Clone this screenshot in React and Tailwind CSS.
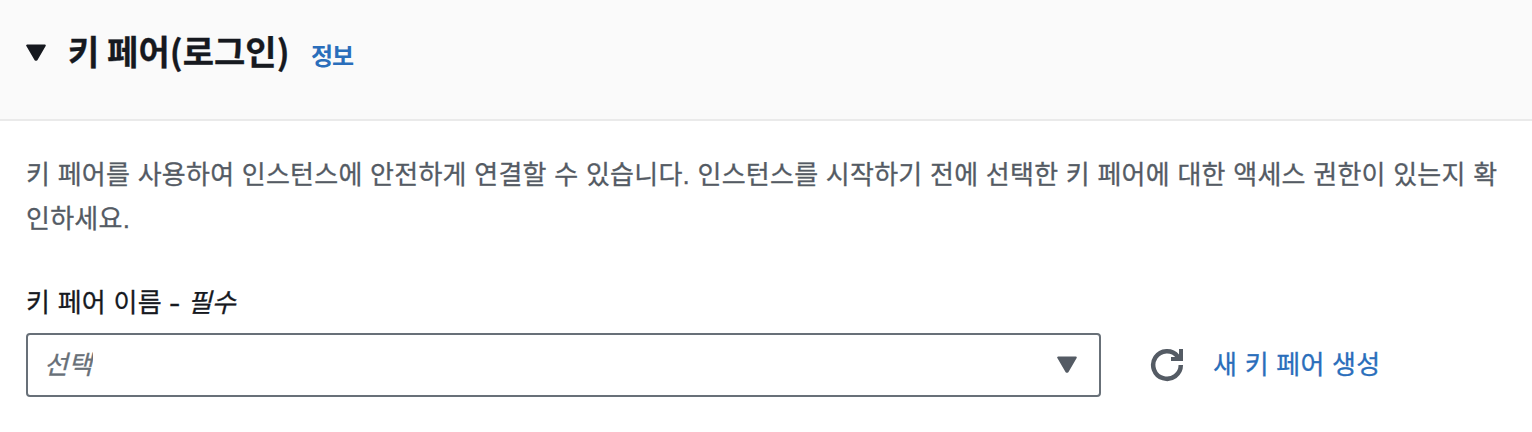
function RefreshIcon() {
  return (
    <svg className="h-[34px] w-[34px]" viewBox="0 0 34 34" fill="none" stroke="#545b64" aria-hidden="true">
      <path d="M30.8 17a13.8 13.8 0 1 1-3.1-8.7l1.8 2" strokeWidth="4.5" />
      <path d="M21 11h10V1" strokeWidth="4" />
    </svg>
  );
}

function Caret({ className }) {
  return (
    <svg className={className} viewBox="0 0 20 17" fill="currentColor" stroke="currentColor" strokeWidth="2" strokeLinejoin="round" aria-hidden="true">
      <path d="M1.2 1.5h17.6L10.5 15.7h-1z" />
    </svg>
  );
}

export default function App() {
  return (
    <main className="h-[432px] w-[1532px] overflow-hidden bg-white font-['Liberation_Sans','Noto_Sans_CJK_KR',sans-serif] text-[26px] leading-[44px] tracking-[0.25px] text-[#545b64] [-webkit-text-stroke:0.3px]">
      <header className="flex h-[121px] items-center border-b-2 border-[#eaeaea] bg-[#fafafa] pb-[14px] pl-[26px]">
        <Caret className="h-[17px] w-5 text-[#16191f]" />
        <h2 className="ml-[22px] w-[222px] whitespace-nowrap pb-[3px] font-['Noto_Sans_CJK_KR',sans-serif] text-[34px] font-bold tracking-[0.05px] text-[#16191f]">키 페어(로그인)</h2>
        <a className="ml-[21px] whitespace-nowrap pt-[9px] text-[24px] font-bold tracking-[-1px] text-[#2a6ebb] [-webkit-text-stroke:0px]">정보</a>
      </header>
      <section className="px-[26px] pt-[32px]">
        <p className="whitespace-nowrap">
          키 페어를 사용하여 인스턴스에 안전하게 연결할 수 있습니다. 인스턴스를 시작하기 전에 선택한 키 페어에 대한 액세스 권한이 있는지 확<br />인하세요.
        </p>
        <label className="mt-10 block text-[#16191f]">키 페어 이름 <span className="mr-[2px] inline-block origin-left scale-x-130">-</span> <i>필수</i></label>
        <div className="mt-[8px] flex items-center">
          <button className="flex h-16 w-[1075px] items-center justify-between rounded-[4px] border-2 border-[#687078] pl-[16px] pr-[22px]">
            <i className="w-[49px] overflow-hidden whitespace-nowrap text-left text-[#687078]">선택</i>
            <Caret className="mb-px h-[17px] w-5 text-[#545b64]" />
          </button>
          <button className="ml-[49px]"><RefreshIcon /></button>
          <a className="ml-[29px] whitespace-nowrap text-[#2a6ebb]">새 키 페어 생성</a>
        </div>
      </section>
    </main>
  );
}
